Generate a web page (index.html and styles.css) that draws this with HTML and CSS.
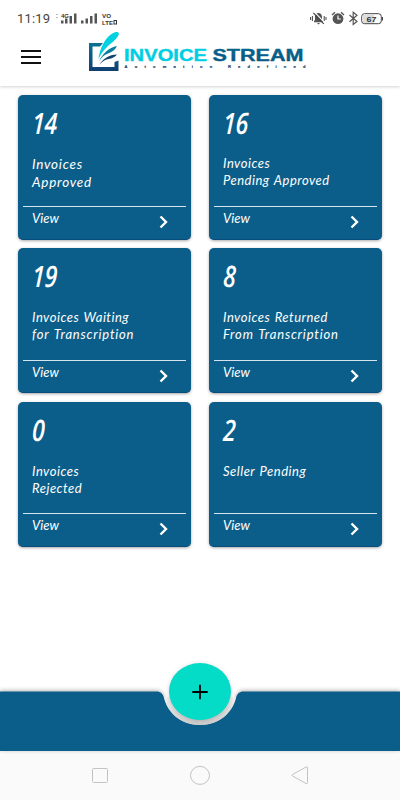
FILE: index.html
```html
<!DOCTYPE html>
<html lang="en">
<head>
<meta charset="UTF-8">
<meta name="viewport" content="width=device-width, initial-scale=1">
<title>Invoice Stream</title>
<link rel="stylesheet" href="styles.css">
</head>
<body>
<header class="header">
  <div class="status">
    <span class="time">11:19</span>
    <svg class="signal" width="66" height="16" viewBox="0 0 66 16">
      <g fill="#bbb"><rect x="1" y="4" width="2" height="1"/><rect x="1" y="7" width="2" height="1"/></g>
      <text x="6" y="7.500" class="tiny" font-size="6" textLength="8">4G</text>
      <g fill="#555">
        <rect x="6" y="10.500" width="2.500" height="3"/><rect x="10" y="8.500" width="2.500" height="5"/><rect x="14.500" y="6" width="2.500" height="7.500"/><rect x="19" y="3.500" width="2.500" height="10"/>
        <rect x="26" y="10.500" width="2.500" height="3"/><rect x="30.500" y="8.500" width="2.500" height="5"/><rect x="35" y="6" width="2.500" height="7.500"/><rect x="39.500" y="3.500" width="2.500" height="10"/>
      </g>
      <text x="47" y="7.800" class="tiny" font-size="5.800" textLength="9" lengthAdjust="spacingAndGlyphs">VO</text>
      <text x="47" y="14.500" class="tiny" font-size="5.800" textLength="11" lengthAdjust="spacingAndGlyphs">LTE</text>
      <rect x="59" y="10.500" width="2.500" height="3.500" fill="none" stroke="#333"/>
    </svg>
    <svg class="system" width="74" height="16" viewBox="0 0 74 16">
      <path d="M.6 7v3M2.400 6v5M14.200 6v5M16 7v3" stroke="#444"/>
      <path d="M4 12.200V11l1-1V7c0-2.500 1.300-4 3.400-4s3.600 1.500 3.600 4v3l1 1v1.200zM7 13h3l-1.500 1.500z" fill="#555"/>
      <path d="M4.300 1.800l10 10.500" stroke="#fff" stroke-width="1.200"/>
      <path d="M3.300 2.800l10.500 11" stroke="#444" stroke-width="1.100"/>
      <circle cx="28" cy="8.700" r="5.400" fill="#555"/>
      <path d="M22 5l3-2.700M34 5l-3-2.700" stroke="#555" stroke-width="1.400"/>
      <path d="M28 5.500v3.500h2.800" stroke="#fff" stroke-width="1.200" fill="none"/>
      <path d="M39.500 5l7.500 6.500-3.800 3V2.200l3.800 3-7.500 6.500" fill="none" stroke="#555" stroke-width="1.200"/>
      <rect x="51.700" y="3.700" width="19.600" height="10" rx="2.800" fill="#fff" stroke="#444"/>
      <path d="M54 4.500h10v8.500H54q-1.500 0-1.500-2V6.500q0-2 1.500-2" fill="#ddd"/>
      <path d="M72.500 7v3.500" stroke="#444"/>
      <text x="56.500" y="11.600" class="tiny" font-size="8" textLength="10" lengthAdjust="spacingAndGlyphs">67</text>
    </svg>
  </div>
  <div class="toolbar">
    <button class="menu" aria-label="Menu"><span></span><span></span><span></span></button>
    <svg class="logo" width="220" height="44" viewBox="0 0 220 44">
      <defs>
        <linearGradient id="frame" x1="0" y1="0" x2="0" y2="1"><stop offset="0" stop-color="#087493"/><stop offset="1" stop-color="#103e70"/></linearGradient>
        <linearGradient id="stream" x1="0" y1="0" x2="0" y2="1"><stop offset="0" stop-color="#076c94"/><stop offset="1" stop-color="#0b4f7c"/></linearGradient>
      </defs>
      <path d="M1 13h14l-3 3.500H4.500V37h22V32l4-1.500V41H1z" fill="url(#frame)"/>
      <path d="M10.500 29C12 17 19 4 28 2c3-.5 3.500 2 2 4-3 5-7 7-11 11-4 3.500-6 7-8.500 12z" fill="#00d0df"/>
      <path d="M11 31.500c3-7.500 10-14 18-15.500-2 4-5 6-9 7.500s-6.500 4-9 8z" fill="#087f9f"/>
      <path d="M11 35c4-6 10-10.500 18-10.500-2 3-5 3.700-8.500 4.500-4 .8-7 3-9.500 6z" fill="#10426f"/>
      <text x="36" y="30.700" class="brand" fill="#00cfe3" stroke="#00cfe3" textLength="83" lengthAdjust="spacingAndGlyphs">INVOICE</text>
      <text x="124.500" y="30.700" class="brand" fill="url(#stream)" stroke="#075f8a" textLength="91" lengthAdjust="spacingAndGlyphs">STREAM</text>
      <text x="36.500" y="38.300" class="slogan" textLength="181">Automation Redefined</text>
    </svg>
  </div>
</header>

<main class="grid">
  <section class="card">
    <div class="count">14</div>
    <div class="label large">Invoices<br>Approved</div>
    <div class="view"><span>View</span><svg width="9" height="14" viewBox="0 0 9 14"><path d="M1.500 1.500L7 7l-5.500 5.500"/></svg></div>
  </section>
  <section class="card">
    <div class="count">16</div>
    <div class="label">Invoices<br>Pending Approved</div>
    <div class="view"><span>View</span><svg width="9" height="14" viewBox="0 0 9 14"><path d="M1.500 1.500L7 7l-5.500 5.500"/></svg></div>
  </section>
  <section class="card">
    <div class="count">19</div>
    <div class="label">Invoices Waiting<br><span class="wide">for Transcription</span></div>
    <div class="view"><span>View</span><svg width="9" height="14" viewBox="0 0 9 14"><path d="M1.500 1.500L7 7l-5.500 5.500"/></svg></div>
  </section>
  <section class="card">
    <div class="count">8</div>
    <div class="label">Invoices Returned<br><span class="wide">From Transcription</span></div>
    <div class="view"><span>View</span><svg width="9" height="14" viewBox="0 0 9 14"><path d="M1.500 1.500L7 7l-5.500 5.500"/></svg></div>
  </section>
  <section class="card">
    <div class="count">0</div>
    <div class="label">Invoices<br>Rejected</div>
    <div class="view"><span>View</span><svg width="9" height="14" viewBox="0 0 9 14"><path d="M1.500 1.500L7 7l-5.500 5.500"/></svg></div>
  </section>
  <section class="card">
    <div class="count">2</div>
    <div class="label">Seller Pending</div>
    <div class="view"><span>View</span><svg width="9" height="14" viewBox="0 0 9 14"><path d="M1.500 1.500L7 7l-5.500 5.500"/></svg></div>
  </section>
</main>

<footer class="bottom-bar">
  <svg class="bar-shape" width="400" height="60" viewBox="0 0 400 60">
    <defs>
      <linearGradient id="notch" x1="0" y1="0" x2="0" y2="1"><stop offset="0" stop-color="#f0f0f0"/><stop offset="1" stop-color="#cdcdcd"/></linearGradient>
    </defs>
    <path class="bar" d="M0 .5H156C161 .5 163 3 164 7C168 23 182 34 200 34S232 23 236 7C237 3 239 .5 244 .5H400V60H0z"/>
    <path d="M164 6C168 23 182 34 200 34S232 23 236 6z" fill="url(#notch)"/>
  </svg>
  <button class="add" aria-label="Add invoice">
    <svg width="16" height="16" viewBox="0 0 16 16"><path d="M8 .7v14.600M.3 8h15.400"/></svg>
  </button>
</footer>
<nav class="system-nav">
  <svg width="400" height="49" viewBox="0 0 400 49">
    <rect x="92.500" y="17.500" width="15" height="14" rx="1"/>
    <ellipse cx="200" cy="24.400" rx="9.500" ry="9"/>
    <path d="M292.500 23.500L306 16q1.500-.7 1.500 1v14.500q0 1.700-1.500 1L292.500 25q-1-.8 0-1.500z"/>
  </svg>
</nav>
</body>
</html>
```
FILE: styles.css
```css
* {
  box-sizing: border-box;
}
body {
  margin: 0;
  width: 400px;
  height: 800px;
  display: flex;
  flex-direction: column;
  background-color: #fff;
  font-family: Lato, sans-serif;
  overflow: hidden;
}
button {
  border: 0;
  padding: 0;
  background: none;
}
svg {
  display: block;
}
.header {
  height: 86px;
  flex: none;
  background-color: #fff;
  box-shadow: 0 1px 3px rgba(0, 0, 0, 0.18);
}
.status {
  display: flex;
  height: 30px;
  padding: 10px 16px 0 17px;
}
.time {
  width: 38px;
  font: 13px/18px Roboto, sans-serif;
  letter-spacing: 0.15px;
  color: #444;
}
.system {
  margin-left: auto;
}
.tiny {
  font-family: "Liberation Sans", sans-serif;
  font-weight: bold;
  fill: #333;
}
.toolbar {
  display: flex;
  padding-left: 21px;
}
.menu {
  display: flex;
  flex-direction: column;
  gap: 4px;
  width: 20px;
  margin: 20px 47px 0 0;
}
.menu span {
  width: 20px;
  height: 2px;
  background-color: #111;
}
.brand {
  font: bold 16.5px "Liberation Sans", sans-serif;
  stroke-width: 0.4;
}
.slogan {
  font: bold 4px "Liberation Sans", sans-serif;
  fill: #164572;
  stroke: #164572;
  stroke-width: 0.2;
}

/* dashboard cards */
.grid {
  display: grid;
  grid-template-columns: 173px 173px;
  grid-auto-rows: 145px;
  column-gap: 18px;
  row-gap: 8.8px;
  padding: 8.6px 18px 0;
}
.card {
  display: flex;
  flex-direction: column;
  padding: 0 5px;
  border-radius: 5px;
  background-color: #0c5e8a;
  border-bottom: 1px solid #084b7d;
  box-shadow: 0 1px 3px rgba(0, 0, 0, 0.35);
  color: #fff;
  font-style: italic;
}
.count {
  height: 60px;
  padding: 10px 0 0 9px;
  font: italic 29.5px/36px "Open Sans", sans-serif;
  font-weight: 600;
  transform: scaleX(0.78) skewX(-3deg);
  transform-origin: 9px 30px;
}
.label {
  height: 52px;
  padding: 1px 0 0 9px;
  font-size: 13px;
  line-height: 17px;
  letter-spacing: 0.5px;
  word-spacing: 1px;
  white-space: nowrap;
}
.large {
  font-size: 13.5px;
  line-height: 18px;
  letter-spacing: 0.75px;
}
.wide {
  letter-spacing: 0.8px;
}
.view {
  display: flex;
  justify-content: space-between;
  height: 33px;
  padding: 3px 18px 0 9px;
  border-top: 1px solid #d5e4ee;
  font-size: 13px;
  line-height: 16px;
}
.view svg {
  margin-top: 5px;
}
.view path {
  fill: none;
  stroke: #fff;
  stroke-width: 2.4;
}

/* bottom bar with notch */
.bottom-bar {
  position: relative;
  height: 60px;
  margin-top: auto;
  flex: none;
}
.bar-shape {
  overflow: visible;
}
.bar {
  fill: #0c5e8a;
  filter: drop-shadow(0 -1px 2px rgba(0, 0, 0, 0.3));
}
.add {
  position: absolute;
  left: 169px;
  top: -28px;
  width: 62px;
  height: 57px;
  display: flex;
  align-items: center;
  justify-content: center;
  border-radius: 50%;
  background-color: #04dcc8;
  box-shadow: 0 1px 4px rgba(0, 0, 0, 0.18);
}
.add path {
  stroke: #000;
  stroke-width: 1.8;
}
.system-nav {
  flex: none;
  height: 49px;
  background-color: #fafafa;
}
.system-nav svg {
  fill: none;
  stroke: #c3c3c3;
}
```
